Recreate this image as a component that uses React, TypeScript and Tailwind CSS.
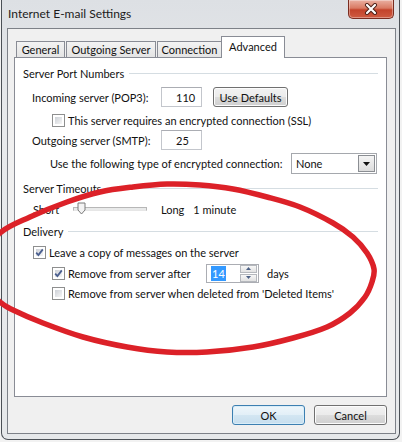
import React from "react";

type Pt = [number, number];

// hand drawn red loop, traced from the screenshot
const loop: Pt[] = [
  [0, 233], [30, 217], [67, 202], [100, 192], [133, 187], [167, 184], [200, 185],
  [233, 189], [267, 197], [300, 207], [333, 223], [353, 237], [367, 253], [374, 269],
  [372, 282], [365, 297], [350, 313], [327, 327], [293, 338], [253, 347], [207, 352],
  [167, 352], [127, 347], [83, 337], [43, 323], [13, 310], [0, 302], [-15, 285], [-18, 260],
];

function smoothPath(pts: Pt[]) {
  const n = pts.length;
  let d = `M${pts[0][0]} ${pts[0][1]}`;
  for (let i = 0; i < n; i++) {
    const p0 = pts[(i - 1 + n) % n];
    const p1 = pts[i];
    const p2 = pts[(i + 1) % n];
    const p3 = pts[(i + 2) % n];
    const c1x = p1[0] + (p2[0] - p0[0]) / 6;
    const c1y = p1[1] + (p2[1] - p0[1]) / 6;
    const c2x = p2[0] - (p3[0] - p1[0]) / 6;
    const c2y = p2[1] - (p3[1] - p1[1]) / 6;
    d += ` C${c1x} ${c1y} ${c2x} ${c2y} ${p2[0]} ${p2[1]}`;
  }
  return d;
}

function Checkbox({ checked = false }: { checked?: boolean }) {
  return (
    <span className="relative flex h-[13px] w-[13px] shrink-0 border border-[#8e8f8f] bg-white">
      <span className="absolute inset-[2px] bg-gradient-to-br from-[#cdd1d7] to-[#f6f6f6]" />
      {checked && (
        <svg viewBox="0 0 11 11" className="absolute inset-0 h-[11px] w-[11px]">
          <path d="M2.2 5.6 L4.4 8 L8.8 2.4" fill="none" stroke="#4a5f8f" strokeWidth="1.8" />
        </svg>
      )}
    </span>
  );
}

function SectionHeader({ title }: { title: string }) {
  return (
    <div className="flex h-[16px] items-center pl-[8px] pr-[8px]">
      <span>{title}</span>
      <div className="ml-[5px] h-px flex-1 bg-[#d5dde2]" />
    </div>
  );
}

function Button({ label, isDefault = false, className = "" }: { label: string; isDefault?: boolean; className?: string }) {
  return (
    <button
      type="button"
      className={
        "flex h-[20px] items-center justify-center rounded-[3px] border " +
        (isDefault
          ? "border-[#3c7fb1] bg-[linear-gradient(#eef6fb_0%,#e2eff7_50%,#d3e6f2_51%,#c6deee_100%)] shadow-[inset_0_0_0_1px_#d9edf8] "
          : "border-[#707070] bg-[linear-gradient(#f2f2f2_0%,#ebebeb_50%,#dddddd_51%,#cfcfcf_100%)] shadow-[inset_0_0_0_1px_#fcfcfc] ") +
        className
      }
    >
      {label}
    </button>
  );
}

function TextBox({ value }: { value: string }) {
  return (
    <div className="flex h-[20px] w-[41px] items-center border border-[#c3c6cc] border-t-[#abadb3] bg-white pl-[14px]">
      {value}
    </div>
  );
}

function Tab({ label, width, active = false }: { label: string; width: string; active?: boolean }) {
  if (active) {
    return (
      <div
        className={
          "relative z-10 -mb-px -ml-[2px] flex h-[22px] items-start justify-center border border-b-0 border-[#898c95] bg-white pt-[4px] " +
          width
        }
      >
        {label}
      </div>
    );
  }
  return (
    <div
      className={
        "mr-px flex h-[16px] items-center justify-center border border-b-0 border-[#898c95] bg-gradient-to-b from-[#f3f3f3] to-[#e4e4e4] " +
        width
      }
    >
      {label}
    </div>
  );
}

export default function App() {
  return (
    <div className="relative h-[442px] w-[402px] overflow-hidden whitespace-nowrap bg-[#f2f2f2] font-['Lato',sans-serif] text-[11px] leading-none text-[#111]">
      <div className="relative ml-px mr-[2px] h-[440px] rounded-b-[7px] border-x border-b border-[#4b5056] bg-[linear-gradient(180deg,#dde0e4_0%,#e8eaec_30%,#e6e8ea_100%)]">
        {/* title bar */}
        <div className="flex h-[28px] items-center pl-[6px] pb-[1px] text-[12px] text-[#1b1b1b]">
          Internet E-mail Settings
        </div>

        {/* close button */}
        <div className="absolute left-[346px] top-0 flex h-[19px] w-[46px] items-center justify-center rounded-b-[5px] border border-t-0 border-[#7a2c20] bg-[linear-gradient(#eab0a2_0%,#d97a63_45%,#c3432b_55%,#cf5b41_100%)] shadow-[inset_0_0_0_1px_rgba(255,255,255,0.35)]">
          <svg viewBox="0 0 14 12" className="h-[12px] w-[14px]">
            <path d="M3 2 L11 10 M11 2 L3 10" stroke="#4a1e16" strokeWidth="4" strokeLinecap="round" />
            <path d="M3 2 L11 10 M11 2 L3 10" stroke="#ffffff" strokeWidth="2.2" strokeLinecap="round" />
          </svg>
        </div>

        {/* client area */}
        <div className="ml-[5px] mr-[3px] flex h-[406px] flex-col border border-[#7d8188] bg-[#f0f0f0]">
          <div className="ml-[6px] mr-[8px] mt-[7px] flex h-[21px] items-end pl-[2px]">
            <Tab label="General" width="w-[49px]" />
            <Tab label="Outgoing Server" width="w-[90px]" />
            <Tab label="Connection" width="w-[65px]" />
            <Tab label="Advanced" width="w-[64px]" active />
          </div>

          <div className="ml-[6px] mr-[8px] flex h-[340px] flex-col border border-[#898c95] bg-white pt-[7px]">
            <SectionHeader title="Server Port Numbers" />

            <div className="mt-[6px] flex h-[20px] items-center pl-[17px]">
              <span className="w-[129px]">Incoming server (POP3):</span>
              <TextBox value="110" />
              <Button label="Use Defaults" className="ml-[11px] w-[75px]" />
            </div>

            <div className="mt-[6px] flex h-[14px] items-center pl-[37px]">
              <Checkbox />
              <span className="ml-[3px]">This server requires an encrypted connection (SSL)</span>
            </div>

            <div className="mt-[3px] flex h-[20px] items-center pl-[17px]">
              <span className="w-[129px]">Outgoing server (SMTP):</span>
              <TextBox value="25" />
            </div>

            <div className="mt-[3px] flex h-[21px] items-center pl-[35px]">
              <span className="w-[241px]">Use the following type of encrypted connection:</span>
              <div className="flex h-[21px] w-[86px] items-center border border-[#a5a8ad] bg-white pl-[4px] pr-px">
                <span className="flex-1">None</span>
                <div className="flex h-[17px] w-[17px] items-center justify-center border border-[#8b8e93] bg-[linear-gradient(#f4f4f4,#dcdcdc)]">
                  <svg viewBox="0 0 7 4" className="h-[4px] w-[7px]">
                    <path d="M0 0 H7 L3.5 4 Z" fill="#111" />
                  </svg>
                </div>
              </div>
            </div>

            <div className="mt-[6px]">
              <SectionHeader title="Server Timeouts" />
            </div>

            <div className="mt-[5px] flex h-[16px] items-center pl-[18px]">
              <span className="w-[40px]">Short</span>
              <div className="relative h-[4px] w-[74px] border border-[#b7b7b7] border-b-[#e6e6e6] bg-[#e9eaea]">
                <svg viewBox="0 0 9 13" className="absolute left-[3px] top-[-6px] h-[13px] w-[9px]">
                  <path d="M1 1 H8 V8 L4.5 12 L1 8 Z" fill="#f3f3f3" stroke="#7b7b7b" strokeWidth="1" />
                </svg>
              </div>
              <span className="ml-[14px]">Long</span>
              <span className="ml-[9px]">1 minute</span>
            </div>

            <div className="mt-[6px]">
              <SectionHeader title="Delivery" />
            </div>

            <div className="mt-[5px] flex h-[16px] items-center pl-[18px]">
              <Checkbox checked />
              <span className="ml-[3px]">Leave a copy of messages on the server</span>
            </div>

            <div className="mt-[3px] flex h-[20px] items-center pl-[37px]">
              <Checkbox checked />
              <span className="ml-[3px] w-[138px]">Remove from server after</span>
              <div className="flex h-[19px] w-[53px] items-center border border-[#abadb3] bg-white pl-[4px] pr-px">
                <span className="flex h-[15px] items-center bg-[#3399ff] px-px text-white">14</span>
                <div className="ml-auto flex h-[17px] w-[17px] flex-col gap-px">
                  <div className="flex flex-1 items-center justify-center border border-[#b5b8bd] bg-[linear-gradient(#f7f7f7,#e2e2e2)]">
                    <svg viewBox="0 0 5 3" className="h-[3px] w-[5px]">
                      <path d="M0 3 H5 L2.5 0 Z" fill="#4d6185" />
                    </svg>
                  </div>
                  <div className="flex flex-1 items-center justify-center border border-[#b5b8bd] bg-[linear-gradient(#f7f7f7,#e2e2e2)]">
                    <svg viewBox="0 0 5 3" className="h-[3px] w-[5px]">
                      <path d="M0 0 H5 L2.5 3 Z" fill="#4d6185" />
                    </svg>
                  </div>
                </div>
              </div>
              <span className="ml-[8px]">days</span>
            </div>

            <div className="mt-[2px] flex h-[16px] items-center pl-[37px]">
              <Checkbox />
              <span className="ml-[3px]">Remove from server when deleted from 'Deleted Items'</span>
            </div>
          </div>

          <div className="mt-[8px] flex justify-end gap-[9px] pr-[8px]">
            <Button label="OK" isDefault className="w-[73px]" />
            <Button label="Cancel" className="w-[73px]" />
          </div>
        </div>
      </div>

      {/* red marker loop drawn over the dialog */}
      <svg className="pointer-events-none absolute left-0 top-0 h-[442px] w-[402px]" viewBox="0 0 402 442">
        <path d={smoothPath(loop)} fill="none" stroke="#dc2128" strokeWidth="5.5" strokeLinecap="round" strokeLinejoin="round" />
      </svg>
    </div>
  );
}
